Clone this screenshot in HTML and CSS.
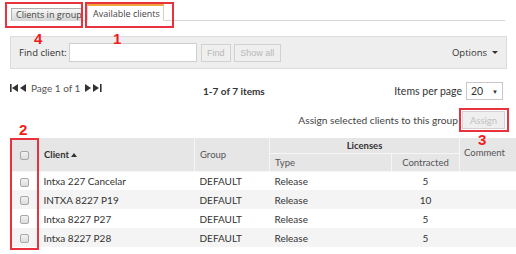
FILE: index.html
```html
<!DOCTYPE html>
<html lang="en">
  <head>
    <meta charset="UTF-8" />
    <title>Clients</title>
    <link rel="stylesheet" href="styles.css">
  </head>
  <body>
    <div class="page">
      <!-- tabs -->
      <div class="tabs">
        <div class="tab tab-inactive">Clients in group</div>
        <div class="tab tab-active">Available clients</div>
      </div>

      <!-- search toolbar -->
      <div class="toolbar">
        <label class="find-label">Find client:</label>
        <input class="find-input" type="text" />
        <button class="btn-flat btn-find">Find</button>
        <button class="btn-flat btn-show">Show all</button>
        <div class="options">Options <span class="caret"></span></div>
      </div>

      <!-- pager -->
      <div class="pager-row">
        <div class="pager">
          <svg width="8" height="8" viewBox="0 0 8 8"><rect x="0" y="0" width="1.6" height="8" fill="#333"/><polygon points="8,0 8,8 2,4" fill="#333"/></svg>
          <svg width="6" height="8" viewBox="0 0 6 8"><polygon points="6,0 6,8 0,4" fill="#333"/></svg>
          <span class="page-text">Page 1 of 1</span>
          <svg width="6" height="8" viewBox="0 0 6 8"><polygon points="0,0 0,8 6,4" fill="#333"/></svg>
          <svg width="9" height="8" viewBox="0 0 9 8"><polygon points="0,0 0,8 6,4" fill="#333"/><rect x="7" y="0" width="1.6" height="8" fill="#333"/></svg>
        </div>
        <div class="item-count">1-7 of 7 items</div>
        <div class="per-page">
          Items per page
          <div class="select">20 <span class="select-arrow">&#9660;</span></div>
        </div>
      </div>

      <div class="assign-row">
        <span>Assign selected clients to this group</span>
        <button class="btn-flat btn-assign">Assign</button>
      </div>

      <!-- clients table -->
      <table class="grid">
        <colgroup>
          <col class="c-check">
          <col class="c-client">
          <col class="c-group">
          <col class="c-type">
          <col class="c-contracted">
          <col class="c-comment">
        </colgroup>
        <thead>
          <tr class="head-top">
            <th rowspan="2" class="center"><span class="check"></span></th>
            <th rowspan="2" class="bold">Client <span class="sort-up"></span></th>
            <th rowspan="2">Group</th>
            <th colspan="2" class="center bold">Licenses</th>
            <th rowspan="2" class="comment-head">Comment</th>
          </tr>
          <tr class="head-sub">
            <th>Type</th>
            <th class="center">Contracted</th>
          </tr>
        </thead>
        <tbody>
          <tr>
            <td class="center"><span class="check"></span></td>
            <td>Intxa 227 Cancelar</td>
            <td>DEFAULT</td>
            <td>Release</td>
            <td class="center">5</td>
            <td></td>
          </tr>
          <tr>
            <td class="center"><span class="check"></span></td>
            <td>INTXA 8227 P19</td>
            <td>DEFAULT</td>
            <td>Release</td>
            <td class="center">10</td>
            <td></td>
          </tr>
          <tr>
            <td class="center"><span class="check"></span></td>
            <td>Intxa 8227 P27</td>
            <td>DEFAULT</td>
            <td>Release</td>
            <td class="center">5</td>
            <td></td>
          </tr>
          <tr>
            <td class="center"><span class="check"></span></td>
            <td>Intxa 8227 P28</td>
            <td>DEFAULT</td>
            <td>Release</td>
            <td class="center">5</td>
            <td></td>
          </tr>
        </tbody>
      </table>
    </div>

    <!-- annotation overlays -->
    <div class="mark box4"></div>
    <div class="mark box1"></div>
    <div class="mark box2"></div>
    <div class="mark box3"></div>
    <div class="num num4">4</div>
    <div class="num num1">1</div>
    <div class="num num2">2</div>
    <div class="num num3">3</div>
  </body>
</html>
```

FILE: styles.css
```css
* {
  margin: 0;
  padding: 0;
  box-sizing: border-box;
}

body {
  background: #fff;
  font-family: 'Open Sans', sans-serif;
  color: #333;
  width: 516px;
  height: 254px;
  overflow: hidden;
  position: relative;
}

.page {
  padding-left: 10px;
  width: 507px;
}

/* tabs */
.tabs {
  display: flex;
  align-items: flex-end;
  height: 21px;
  border-bottom: 1px solid #d6d6d6;
  width: 495px;
}

.tab {
  font-size: 9px;
  line-height: 1;
  white-space: nowrap;
  overflow: hidden;
  display: flex;
  align-items: center;
  color: #444;
}

.tab-inactive {
  margin-left: 1px;
  height: 12px;
  width: 71px;
  padding-left: 4px;
  border: 1px solid #b0b0b0;
  border-bottom: none;
  background: linear-gradient(#f6f6f6, #d8d8d8);
}

.tab-active {
  margin-left: 5px;
  height: 17px;
  width: 77px;
  padding-left: 5px;
  border: 1px solid #cfcfcf;
  border-top: 2px solid #f0a43c;
  border-bottom: 1px solid #fff;
  margin-bottom: -1px;
  background: #fff;
}

/* toolbar */
.toolbar {
  margin-top: 15px;
  height: 33px;
  background: #eeeeee;
  border: 1px solid #dcdcdc;
  display: flex;
  align-items: center;
  padding-left: 8px;
  padding-right: 8px;
}

.find-label {
  font-size: 9.5px;
  color: #333;
  margin-right: 2px;
}

.find-input {
  width: 128px;
  height: 19px;
  border: 1px solid #cfcfcf;
  background: #fff;
}

.btn-flat {
  font-family: 'Liberation Sans', Arial, sans-serif;
  font-size: 9px;
  color: #b8b8b8;
  background: #efefef;
  border: 1px solid #d2d2d2;
  height: 18px;
}

.btn-find {
  margin-left: 4px;
  width: 30px;
}

.btn-show {
  margin-left: 3px;
  width: 47px;
}

.options {
  margin-left: auto;
  font-size: 9.5px;
  color: #333;
  display: flex;
  align-items: center;
  gap: 5px;
}

.caret {
  width: 0;
  height: 0;
  border-left: 3px solid transparent;
  border-right: 3px solid transparent;
  border-top: 3px solid #333;
}

/* pager */
.pager-row {
  margin-top: 11px;
  height: 22px;
  display: flex;
  align-items: center;
  font-family: 'Lato', sans-serif;
  font-size: 10px;
}

.pager {
  display: flex;
  align-items: center;
  gap: 2px;
  width: 193px;
  margin-top: -6px;
}

.page-text {
  color: #555;
  margin: 0 3px 0 3px;
}

.item-count {
  font-weight: bold;
  color: #333;
}

.per-page {
  margin-left: auto;
  display: flex;
  align-items: center;
  gap: 4px;
  margin-right: 4px;
  color: #333;
  font-size: 10.5px;
}

.select {
  width: 37px;
  height: 18px;
  border: 1px solid #c8c8c8;
  background: #fff;
  display: flex;
  align-items: center;
  justify-content: space-between;
  padding: 0 4px 0 4px;
  font-size: 10.5px;
}

.select-arrow {
  font-size: 6px;
}

.assign-row {
  margin-top: 8px;
  height: 20px;
  display: flex;
  align-items: center;
  justify-content: flex-end;
  font-family: 'Lato', sans-serif;
  font-size: 10.2px;
  color: #444;
  padding-right: 2px;
}

.btn-assign {
  margin-left: 4px;
  width: 43px;
  height: 18px;
  font-family: 'Lato', sans-serif;
  font-size: 9.5px;
  color: #c0c0c0;
}

/* table */
.grid {
  margin-top: 8px;
  width: 506px;
  border-collapse: collapse;
  table-layout: fixed;
  font-family: 'Lato', sans-serif;
  font-size: 10px;
  color: #333;
}

.c-check { width: 28px; }
.c-client { width: 156px; }
.c-group { width: 75px; }
.c-type { width: 122px; }
.c-contracted { width: 68px; }
.c-comment { width: 57px; }

.grid th {
  background: #e6e6e6;
  font-weight: normal;
  text-align: left;
  color: #555;
  font-size: 9.5px;
  padding: 0 5px;
  border: 1px solid #f6f6f6;
  border-top: none;
}

.grid th.bold {
  font-weight: bold;
  color: #333;
}

.head-top th {
  height: 15px;
}

.head-sub th {
  height: 18px;
}

.grid th.comment-head {
  vertical-align: top;
  padding-top: 9px;
  padding-left: 4px;
}

.grid td {
  height: 19px;
  padding: 0 5px;
}

.grid tbody tr:nth-child(even) td {
  background: #f4f4f4;
}

.center {
  text-align: center !important;
}

.sort-up {
  display: inline-block;
  width: 0;
  height: 0;
  border-left: 3px solid transparent;
  border-right: 3px solid transparent;
  border-bottom: 4px solid #333;
  vertical-align: 1px;
}

.check {
  display: inline-block;
  width: 9px;
  height: 9px;
  border: 1px solid #a8a8a8;
  border-radius: 2px;
  background: linear-gradient(#f2f2f2, #dcdcdc);
  vertical-align: middle;
}

/* annotations */
.mark {
  position: absolute;
  border: 2px solid #e8323e;
}

.box4 { left: 5px; top: 2px; width: 78px; height: 26px; }
.box1 { left: 85px; top: 2px; width: 89px; height: 26px; }
.box2 { left: 10px; top: 138px; width: 29px; height: 112px; }
.box3 { left: 459px; top: 108px; width: 50px; height: 24px; }

.num {
  position: absolute;
  font-family: 'Liberation Sans', Arial, sans-serif;
  font-weight: bold;
  font-size: 15px;
  line-height: 1;
  color: #f01c1c;
}

.num4 { left: 34px; top: 31px; }
.num1 { left: 113px; top: 31px; }
.num2 { left: 19px; top: 122px; }
.num3 { left: 478px; top: 132px; }
```
